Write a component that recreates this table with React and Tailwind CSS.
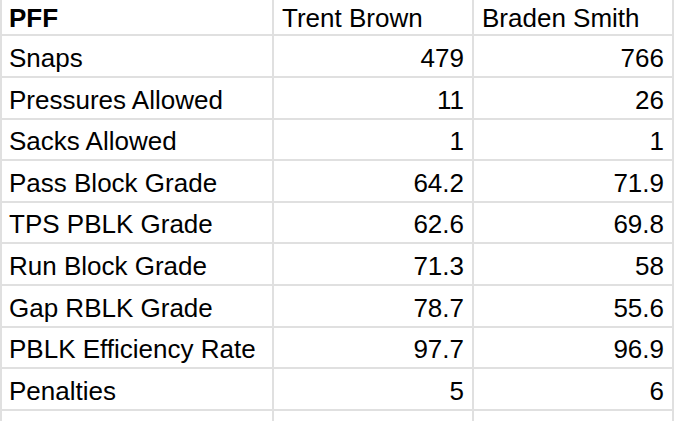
const rows = [
  ['Snaps', '479', '766'],
  ['Pressures Allowed', '11', '26'],
  ['Sacks Allowed', '1', '1'],
  ['Pass Block Grade', '64.2', '71.9'],
  ['TPS PBLK Grade', '62.6', '69.8'],
  ['Run Block Grade', '71.3', '58'],
  ['Gap RBLK Grade', '78.7', '55.6'],
  ['PBLK Efficiency Rate', '97.7', '96.9'],
  ['Penalties', '5', '6'],
  ['', '', ''],
];

export default function App() {
  return (
    <div
      className="w-[680px] h-[421px] overflow-hidden bg-white text-black"
      style={{ fontFamily: '"Liberation Sans", Arial, sans-serif' }}
    >
      <div className="w-[674px] bg-[#e0e0e0] px-[2px] grid grid-cols-[270px_198px_198px] gap-[2px] grid-rows-[34px_40px_40px_39px_40px_39px_40px_40px_39px_40px_40px] text-[26px] leading-[26px]">
        <div className="bg-white flex items-end pl-[7px] pb-[3px] font-bold">PFF</div>
        <div className="bg-white flex items-end pl-[8px] pb-[3px]">Trent Brown</div>
        <div className="bg-white flex items-end pl-[8px] pb-[3px]">Braden Smith</div>
        {rows.map(([label, a, b], i) => (
          <Row key={i} label={label} a={a} b={b} />
        ))}
      </div>
    </div>
  );
}

function Row({ label, a, b }) {
  return (
    <>
      <div className="bg-white flex items-end pl-[7px] pb-[5px] whitespace-nowrap">{label}</div>
      <div className="bg-white flex items-end justify-end pr-[8px] pb-[5px]">{a}</div>
      <div className="bg-white flex items-end justify-end pr-[8px] pb-[5px]">{b}</div>
    </>
  );
}
